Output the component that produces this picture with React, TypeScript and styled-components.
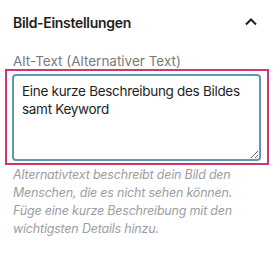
import styled, { createGlobalStyle } from "styled-components";

const Global = createGlobalStyle`
    html, body {
        margin: 0;
        padding: 0;
        background: #ffffff;
    }
    body {
        font-family: Inter, "Noto Sans", "Liberation Sans", sans-serif;
        -webkit-font-smoothing: antialiased;
    }
`;

const Panel = styled.section`
    width: 276px;
    height: 254px;
    padding: 0 7px 0 5px;
    box-sizing: border-box;
`;

const Header = styled.div`
    height: 44px;
    display: flex;
    align-items: center;
    justify-content: space-between;
    padding: 0 12px 0 8px;

    h2 {
        margin: 0;
        font-size: 14px;
        font-weight: 600;
        color: #1e1e1e;
        letter-spacing: -0.3px;
    }

    svg {
        display: block;
    }
`;

const Label = styled.label`
    display: block;
    padding-left: 8px;
    margin-top: 10px;
    font-size: 13.5px;
    line-height: 15px;
    color: #7a7a7a;
`;

const Highlight = styled.div`
    border: 2px solid #d4356c;
    padding: 3px 6px 2px 5px;
`;

const Field = styled.textarea`
    display: block;
    width: 100%;
    height: 87px;
    box-sizing: border-box;
    margin: 0;
    border: 2px solid #5c98b4;
    border-radius: 4px;
    padding: 6px 8px;
    font-family: inherit;
    font-size: 13.5px;
    letter-spacing: -0.3px;
    line-height: 18px;
    color: #1e1e1e;
    background: #ffffff;
    outline: none;
    resize: vertical;
`;

const Help = styled.p`
    max-width: 222px;
    margin: 1px 0 0;
    padding-left: 8px;
    font-size: 12.5px;
    letter-spacing: -0.2px;
    line-height: 18px;
    font-style: italic;
    color: #9b9ea3;
`;

export default function App() {
    return (
        <>
            <Global />
            <Panel>
                <Header>
                    <h2>Bild-Einstellungen</h2>
                    <svg width="12" height="8" viewBox="0 0 12 8">
                        <polyline points="1,6.5 6,1.5 11,6.5" fill="none" stroke="#1e1e1e" strokeWidth="2" />
                    </svg>
                </Header>
                <Label htmlFor="alt">Alt-Text (Alternativer Text)</Label>
                <Highlight>
                    <Field id="alt" readOnly defaultValue="Eine kurze Beschreibung des Bildes samt Keyword" />
                </Highlight>
                <Help>
                    Alternativtext beschreibt dein Bild den Menschen, die es nicht sehen können. Füge eine kurze Beschreibung mit den wichtigsten Details hinzu.
                </Help>
            </Panel>
        </>
    );
}
